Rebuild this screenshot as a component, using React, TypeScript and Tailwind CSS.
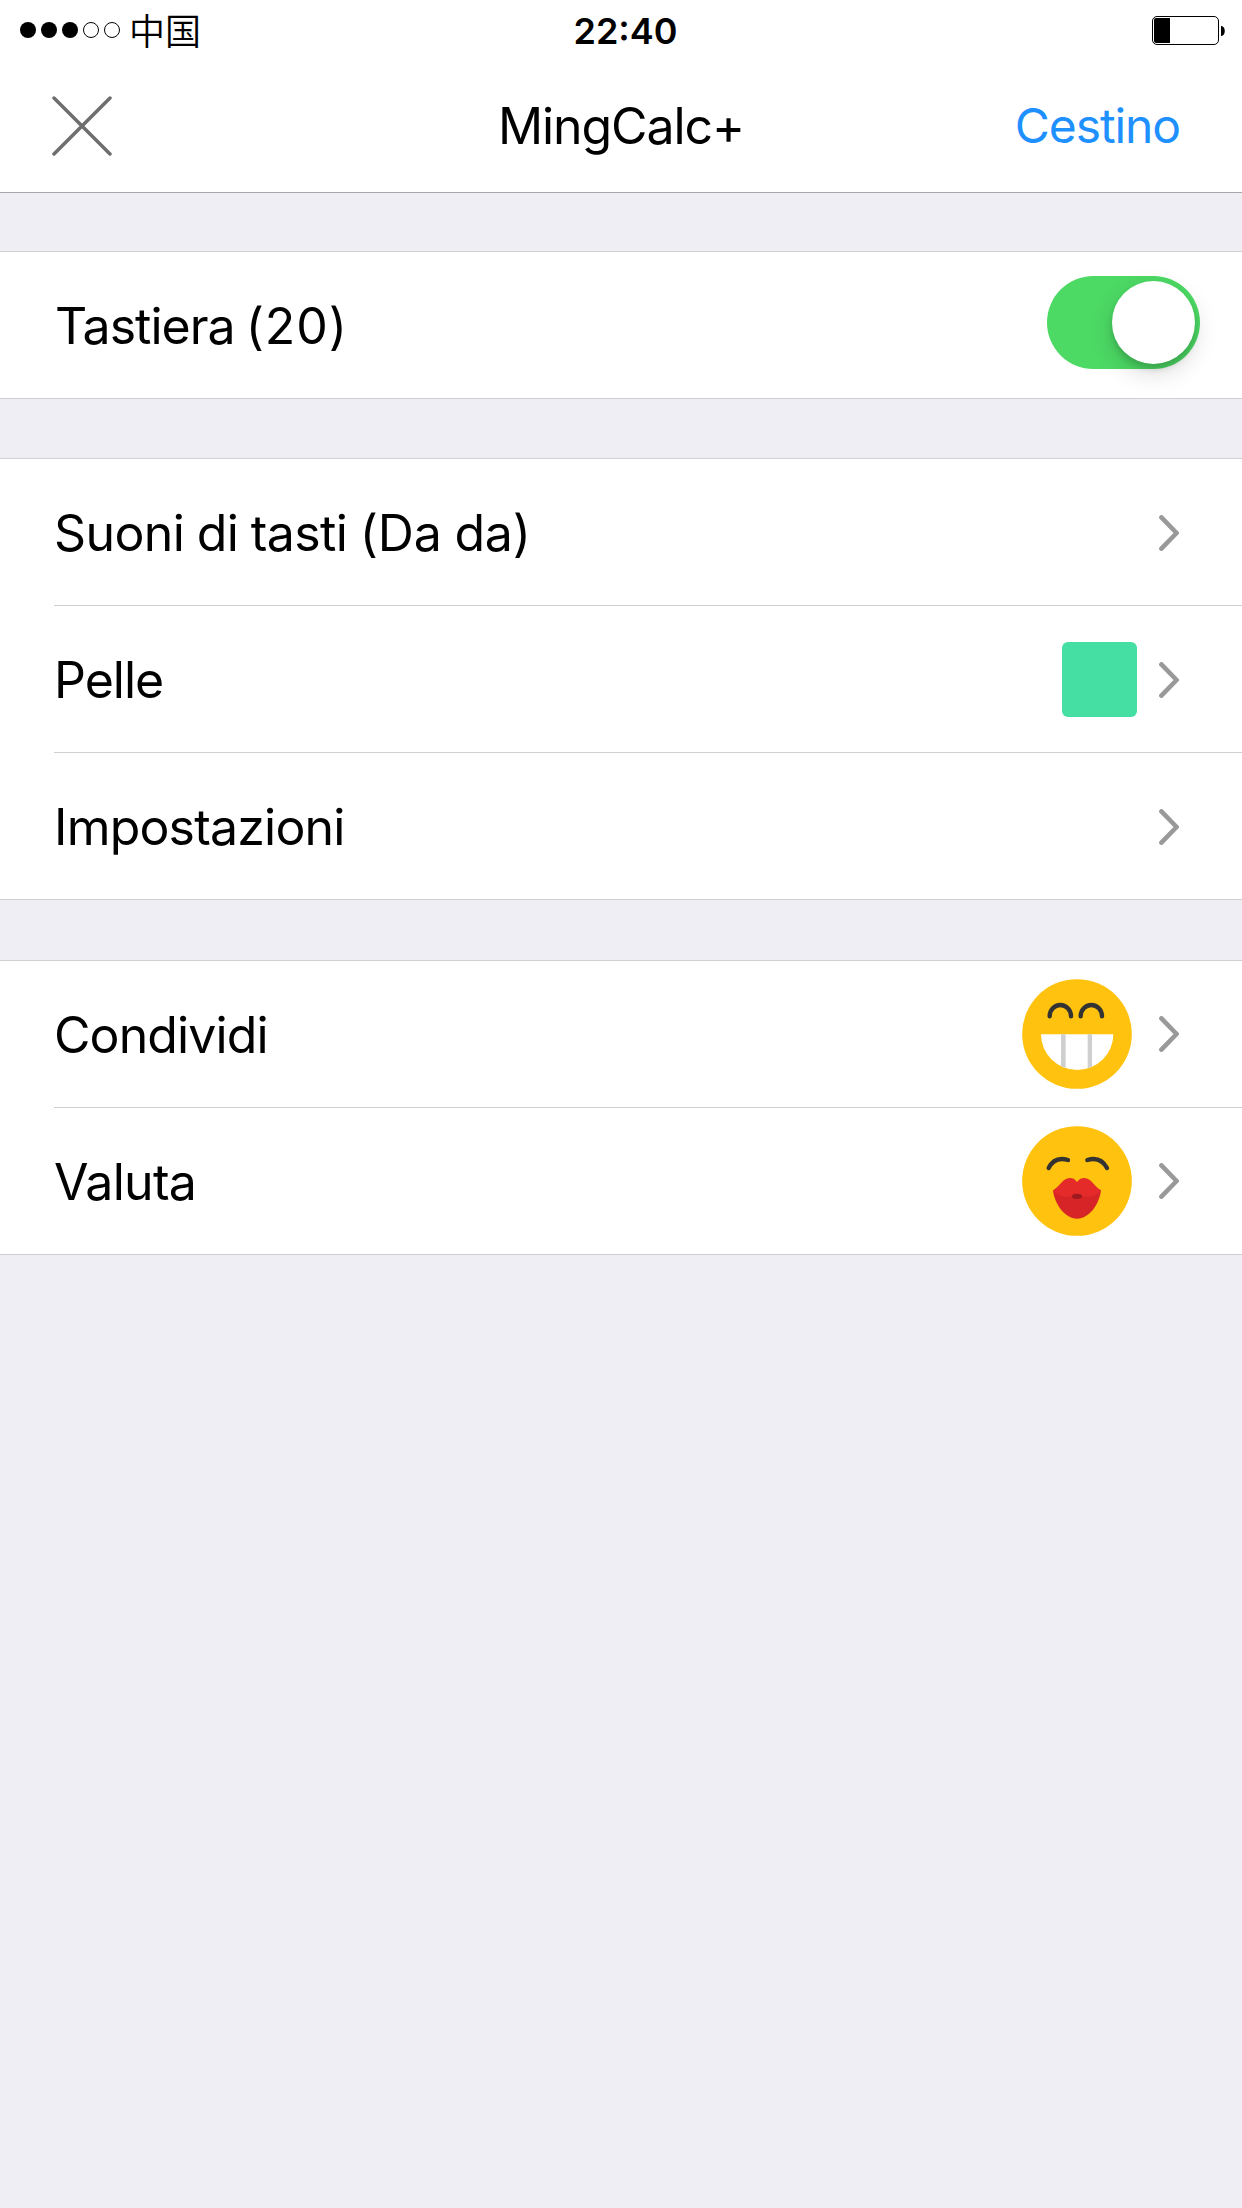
import { useState, type ReactNode } from 'react';

function StatusBar() {
  return (
    <div className="grid h-[60px] grid-cols-3 items-center pl-5 pr-[17px]">
      <div className="flex items-center">
        <div className="flex gap-[5px]">
          {[true, true, true, false, false].map((on, i) => (
            <span
              key={i}
              className={on ? 'size-4 rounded-full bg-black' : 'size-4 rounded-full border border-black'}
            />
          ))}
        </div>
        <span className="ml-[9px] pb-[2px] font-['Noto_Sans_CJK_SC',sans-serif] text-[36px] font-[350] leading-[56px]">中国</span>
      </div>
      <span className="pl-[6px] pt-[2px] text-center text-[36px] font-semibold leading-[58px]">22:40</span>
      <svg className="mt-px justify-self-end" width="73" height="29" viewBox="0 0 73 29">
        <rect x="0.5" y="0.5" width="66" height="28" rx="4.5" fill="none" stroke="#000" />
        <path d="M4 2h14v25H4a2 2 0 0 1-2-2V4a2 2 0 0 1 2-2z" />
        <path d="M69 10c5 0 5 10 0 10z" />
      </svg>
    </div>
  );
}

function Chevron() {
  return (
    <svg width="20" height="36" viewBox="0 0 20 36" fill="none" stroke="#999" strokeWidth="4.6" strokeLinecap="round">
      <path d="M2.4 2.4 17.6 18 2.4 33.6" />
    </svg>
  );
}

function GrinFace() {
  return (
    <svg width="110" height="110" viewBox="0 0 330 330" fill="none">
      <circle cx="165" cy="165" r="164.5" fill="#ffc20e" />
      <g stroke="#333" strokeWidth="13" strokeLinecap="round">
        <path d="M83 112a32 34 0 0 1 64 0" />
        <path d="M176 112a32 34 0 0 1 64 0" />
      </g>
      <path d="M57 166h217a108.5 107 0 0 1-217 0z" fill="#fff" />
      <path d="M117 166h14v101l-14-5zM197 166h13v97l-13 5z" fill="#cfcfcf" />
    </svg>
  );
}

function KissFace() {
  return (
    <svg width="110" height="110" viewBox="0 0 330 330" fill="none">
      <circle cx="165" cy="165" r="164.5" fill="#ffc20e" />
      <g stroke="#333" strokeWidth="13" strokeLinecap="round">
        <path d="M80 126C92 102 112 94 138 102" />
        <path d="M196 102C222 94 242 102 255 126" />
      </g>
      <path d="M93 193C98 235 128 278 165 278S232 235 237 193L165 185z" fill="#d62427" />
      <path
        d="M93 193C112 182 122 157 143 156C154 156 160 161 165 168C170 161 176 156 187 156C208 157 218 182 237 193C222 213 195 217 178 208C170 204 160 204 152 208C135 217 108 213 93 193z"
        fill="#e52b2a"
      />
      <ellipse cx="165" cy="211" rx="15" ry="8" fill="#9c1a1e" />
    </svg>
  );
}

function Switch({ on, onChange }: { on: boolean; onChange: (v: boolean) => void }) {
  return (
    <button
      role="switch"
      aria-checked={on}
      onClick={() => onChange(!on)}
      className={`mb-[5px] flex h-[93px] w-[153px] items-center rounded-full px-[5px] ${
        on ? 'justify-end bg-[#4cd964]' : 'justify-start bg-gray-200'
      }`}
    >
      <span className="size-[83px] rounded-full bg-white shadow-[0_9px_24px_rgba(0,0,0,0.15),0_5px_6px_rgba(0,0,0,0.14)]" />
    </button>
  );
}

function Group({ children }: { children: ReactNode }) {
  return <section className="border-y border-[#d0d0d2] bg-white">{children}</section>;
}

function Row({ label, tracking, last, children }: { label: ReactNode; tracking: string; last?: boolean; children: ReactNode }) {
  return (
    <div className="pl-[54px]">
      <div className={`flex items-center justify-between ${last ? 'h-[146px]' : 'h-[147px] border-b border-[#d0d0d2]'}`}>
        <span className={`pt-px text-[50px] leading-[60px] ${tracking}`}>{label}</span>
        {children}
      </div>
    </div>
  );
}

export default function App() {
  const [keyboard, setKeyboard] = useState(true);

  return (
    <main className="min-h-[2208px] w-[1242px] bg-[#efeef4] font-[Inter,sans-serif] text-black">
      <header className="border-b border-[#a7a7aa] bg-white">
        <StatusBar />
        <div className="grid h-[132px] grid-cols-3 items-center pl-[52px] pr-[62px]">
          <svg width="60" height="60" viewBox="0 0 60 60" stroke="#6e6e6e" strokeWidth="3.5" strokeLinecap="round">
            <path d="M2 2 58 58M58 2 2 58" />
          </svg>
          <h1 className="pl-[10px] text-center text-[50px] leading-[60px] tracking-[-1.1px]">MingCalc+</h1>
          <button className="justify-self-end text-[48px] leading-[60px] tracking-[-1.1px] text-[#1e90ff]">Cestino</button>
        </div>
      </header>

      <div className="pt-[58px]">
        <Group>
          <Row
            label={
              <>
                Tastiera <span className="tracking-[0.9px]">(20)</span>
              </>
            }
            tracking="pl-px tracking-[-1px] [word-spacing:-2px]"
            last
          >
            <div className="pr-[42px]">
              <Switch on={keyboard} onChange={setKeyboard} />
            </div>
          </Row>
        </Group>
      </div>

      <div className="pt-[59px]">
        <Group>
          <Row
            label={
              <>
                Suoni di tasti <span className="tracking-[-0.2px]">(Da da)</span>
              </>
            }
            tracking="tracking-[-0.6px] [word-spacing:-1px]"
          >
            <div className="pr-[63px] pt-px">
              <Chevron />
            </div>
          </Row>
          <Row label="Pelle" tracking="tracking-[-1px]">
            <div className="flex items-center gap-[22px] pr-[63px] pt-px">
              <span className="size-[75px] rounded-md bg-[#45dfa4]" />
              <Chevron />
            </div>
          </Row>
          <Row label="Impostazioni" tracking="tracking-[-0.8px]" last>
            <div className="pr-[63px] pt-px">
              <Chevron />
            </div>
          </Row>
        </Group>
      </div>

      <div className="pt-[60px]">
        <Group>
          <Row label="Condividi" tracking="tracking-[-0.9px]">
            <div className="flex items-center gap-[27px] pr-[63px]">
              <GrinFace />
              <Chevron />
            </div>
          </Row>
          <Row label="Valuta" tracking="tracking-[-0.7px]" last>
            <div className="flex items-center gap-[27px] pr-[63px]">
              <KissFace />
              <Chevron />
            </div>
          </Row>
        </Group>
      </div>
    </main>
  );
}
